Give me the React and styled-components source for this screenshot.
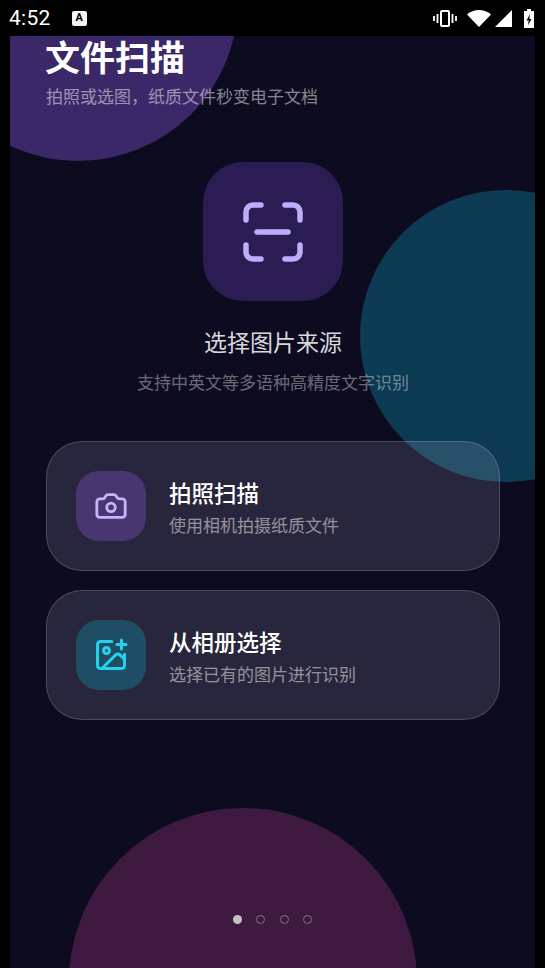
import { Camera, ImagePlus } from 'lucide-react'
import styled, { createGlobalStyle } from 'styled-components'

const GlobalStyle = createGlobalStyle`
  html, body {
    margin: 0;
    padding: 0;
    background: #000;
  }
  body {
    font-family: "Noto Sans CJK SC", "Noto Sans", sans-serif;
  }
`

const Page = styled.div`
  width: 545px;
  height: 968px;
  overflow: hidden;
  background: #000;
`

const StatusBar = styled.div`
  height: 36px;
  display: flex;
  align-items: center;
  padding: 0 11px 0 9px;
  box-sizing: border-box;
  color: #fff;
`

const Clock = styled.span`
  font-family: Roboto, sans-serif;
  font-size: 21px;
  letter-spacing: 0.3px;
  margin-right: 21px;
`

const NoticeBadge = styled.span`
  width: 15px;
  height: 15px;
  border-radius: 2px;
  background: #f4f4f4;
  color: #000;
  font-family: Roboto, sans-serif;
  font-size: 11px;
  font-weight: 700;
  line-height: 14px;
  text-align: center;
`

const StatusIcons = styled.div`
  margin-left: auto;
  display: flex;
  align-items: center;
`

const StatusSlot = styled.span`
  display: flex;
  margin-right: ${({ $gap }) => $gap || 0}px;
`

const Screen = styled.main`
  position: relative;
  width: 525px;
  height: 932px;
  margin-left: 10px;
  background: #0d0b20;
`

const BlobLayer = styled.div`
  position: absolute;
  inset: 0;
  overflow: hidden;
`

const Blob = styled.div`
  position: absolute;
  left: ${({ $left }) => $left}px;
  top: ${({ $top }) => $top}px;
  width: ${({ $size }) => $size}px;
  height: ${({ $size }) => $size}px;
  border-radius: 50%;
  background: ${({ $color }) => $color};
`

const Content = styled.div`
  position: relative;
  height: 100%;
  display: flex;
  flex-direction: column;
  padding: 0 35px 0 36px;
  box-sizing: border-box;
`

const Title = styled.h1`
  margin: 0 0 0 -1px;
  color: #fff;
  font-size: 35px;
  font-weight: 700;
  line-height: 40px;
`

const Subtitle = styled.p`
  margin: 8px 0 0;
  color: rgba(255, 255, 255, 0.5);
  font-size: 17px;
  line-height: 24px;
`

const Hero = styled.section`
  display: flex;
  flex-direction: column;
  align-items: center;
  margin-top: 54px;
`

const HeroIcon = styled.div`
  width: 140px;
  height: 139px;
  border-radius: 40px;
  background: #2b1d54;
  display: flex;
  align-items: center;
  justify-content: center;
`

const HeroTitle = styled.h2`
  margin: 24px 0 0;
  color: rgba(255, 255, 255, 0.85);
  font-size: 23px;
  font-weight: 400;
  line-height: 32px;
`

const HeroText = styled.p`
  margin: 13px 0 0;
  color: rgba(255, 255, 255, 0.4);
  font-size: 17px;
  line-height: 24px;
`

const Options = styled.div`
  display: flex;
  flex-direction: column;
  gap: 19px;
  margin-top: 47px;
`

const OptionCard = styled.button`
  display: flex;
  align-items: center;
  gap: 23px;
  width: 454px;
  height: 130px;
  padding: 0 29px;
  box-sizing: border-box;
  border: 1px solid rgba(255, 255, 255, 0.17);
  border-radius: 36px;
  background: rgba(235, 235, 255, 0.125);
  font-family: inherit;
  text-align: left;
`

const OptionIcon = styled.span`
  flex: none;
  width: 70px;
  height: 70px;
  border-radius: 23px;
  background: ${({ $bg }) => $bg};
  color: ${({ $color }) => $color};
  display: flex;
  align-items: center;
  justify-content: center;
`

const OptionText = styled.span`
  display: flex;
  flex-direction: column;
  gap: 6px;
`

const OptionTitle = styled.span`
  color: #fff;
  font-size: 22.5px;
  font-weight: 500;
  line-height: 30px;
`

const OptionHint = styled.span`
  color: rgba(255, 255, 255, 0.5);
  font-size: 17px;
  line-height: 23px;
`

const Dots = styled.div`
  position: absolute;
  left: 223px;
  bottom: 44px;
  display: flex;
  gap: 14.300px;
`

const Dot = styled.span`
  width: 9px;
  height: 9px;
  box-sizing: border-box;
  border-radius: 50%;
  background: ${({ $active }) => ($active ? '#c4c0c6' : 'transparent')};
  border: ${({ $active }) => ($active ? 'none' : '1px solid rgba(255, 255, 255, 0.35)')};
`

const VibrateIcon = () => (
  <svg width="24" height="17" viewBox="0 0 24 17" fill="none" stroke="#fff">
    <rect x="8" y="1" width="8" height="15" rx="1" strokeWidth="2" />
    <path d="M4.500 4v9M1 6v5M19.500 4v9M23 6v5" strokeWidth="1.800" />
  </svg>
)

const WifiIcon = () => (
  <svg width="24" height="17" viewBox="0 0 24 17" fill="#fff">
    <path d="M0 4.500C3.200 1.700 7.400 0 12 0s8.800 1.700 12 4.500L12 17z" />
  </svg>
)

const SignalIcon = () => (
  <svg width="17" height="17" viewBox="0 0 17 17" fill="#fff">
    <path d="M17 0v17H0z" />
  </svg>
)

const BatteryIcon = () => (
  <svg width="10" height="19" viewBox="0 0 10 19">
    <path d="M3 0h4v2h3v17H0V2h3z" fill="#fff" />
    <path d="M6 5 2.500 11.500h2.200L4 16.500l3.500-6.500H5.300z" fill="#000" />
  </svg>
)

const ScanIcon = () => (
  <svg width="60" height="60" viewBox="0 0 60 60" fill="none" stroke="#bcaefa" strokeWidth="5.500" strokeLinecap="round">
    <path d="M3 18V10a7 7 0 0 1 7-7h8" />
    <path d="M42 3h8a7 7 0 0 1 7 7v8" />
    <path d="M3 43v7a7 7 0 0 0 7 7h8" />
    <path d="M42 57h8a7 7 0 0 0 7-7v-7" />
    <path d="M14 30h31" />
  </svg>
)

const App = () => (
  <Page>
    <GlobalStyle />
    <StatusBar>
      <Clock>4:52</Clock>
      <NoticeBadge>A</NoticeBadge>
      <StatusIcons>
        <StatusSlot $gap={10}>
          <VibrateIcon />
        </StatusSlot>
        <StatusSlot $gap={4}>
          <WifiIcon />
        </StatusSlot>
        <StatusSlot $gap={12}>
          <SignalIcon />
        </StatusSlot>
        <StatusSlot>
          <BatteryIcon />
        </StatusSlot>
      </StatusIcons>
    </StatusBar>
    <Screen>
      <BlobLayer>
        <Blob $left={-92} $top={-195} $size={320} $color="#3a2868" />
        <Blob $left={350} $top={154} $size={292} $color="#0d3b53" />
        <Blob $left={59} $top={772} $size={348} $color="#3f1a40" />
      </BlobLayer>
      <Content>
        <header>
          <Title>文件扫描</Title>
          <Subtitle>拍照或选图，纸质文件秒变电子文档</Subtitle>
        </header>
        <Hero>
          <HeroIcon>
            <ScanIcon />
          </HeroIcon>
          <HeroTitle>选择图片来源</HeroTitle>
          <HeroText>支持中英文等多语种高精度文字识别</HeroText>
        </Hero>
        <Options>
          <OptionCard>
            <OptionIcon $bg="#47366f" $color="#c4b5fd">
              <Camera size={34} strokeWidth={2} />
            </OptionIcon>
            <OptionText>
              <OptionTitle>拍照扫描</OptionTitle>
              <OptionHint>使用相机拍摄纸质文件</OptionHint>
            </OptionText>
          </OptionCard>
          <OptionCard>
            <OptionIcon $bg="#1f4d63" $color="#22d3ee">
              <ImagePlus size={36} strokeWidth={2} />
            </OptionIcon>
            <OptionText>
              <OptionTitle>从相册选择</OptionTitle>
              <OptionHint>选择已有的图片进行识别</OptionHint>
            </OptionText>
          </OptionCard>
        </Options>
      </Content>
      <Dots>
        <Dot $active />
        <Dot />
        <Dot />
        <Dot />
      </Dots>
    </Screen>
  </Page>
)

export default App
